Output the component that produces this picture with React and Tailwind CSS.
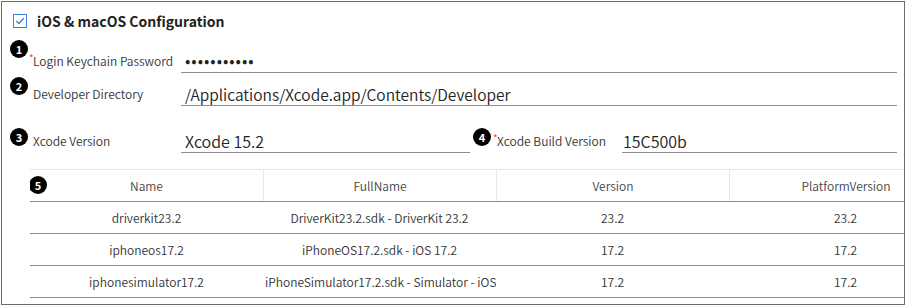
import React from "react";

function Badge({ n, className }) {
  return (
    <span
      className={`absolute flex h-[18px] w-[18px] items-center justify-center rounded-full bg-black text-[11px] font-bold leading-none text-white ${className}`}
    >
      {n}
    </span>
  );
}

function Star({ className }) {
  return (
    <span className={`absolute text-[10px] leading-none text-[#e53935] ${className}`}>*</span>
  );
}

const rows = [
  ["driverkit23.2", "DriverKit23.2.sdk - DriverKit 23.2", "23.2", "23.2"],
  ["iphoneos17.2", "iPhoneOS17.2.sdk - iOS 17.2", "17.2", "17.2"],
  ["iphonesimulator17.2", "iPhoneSimulator17.2.sdk - Simulator - iOS 17.2", "17.2", "17.2"],
];

export default function App() {
  return (
    <div className="h-[305px] w-[906px] bg-white pl-px pt-px font-['Noto_Sans_CJK_KR','Noto_Sans',sans-serif] font-[350] text-[#333]">
      <div className="h-[304px] w-[904px] overflow-hidden border border-[#6e6e6e]">
        {/* title */}
        <div className="flex h-[38px] items-center gap-[10px] pl-[11px]">
          <svg width="14" height="14" viewBox="0 0 14 14">
            <rect x="0.5" y="0.5" width="13" height="13" fill="#fff" stroke="#3d7fd8" />
            <path d="M3.2 7 L5.8 9.6 L10.8 4.2" fill="none" stroke="#3d7fd8" strokeWidth="1.4" />
          </svg>
          <span className="text-[14px] font-bold text-[#222]">iOS &amp; macOS Configuration</span>
        </div>

        {/* row 1 */}
        <div className="relative flex h-[33px] items-end pr-[7px]">
          <Badge n="1" className="left-[8px] top-0" />
          <div className="relative w-[179px] pb-[4px] pl-[31px] text-[12px] leading-[16px]">
            <Star className="left-[27px] top-0" />
            Login Keychain Password
          </div>
          <div className="flex h-[33px] flex-1 items-end border-b border-[#8c8c8c] pb-[2px] pl-[4px] text-[16px] leading-[20px] tracking-[1px] text-[#222]">
            •••••••••••
          </div>
        </div>

        {/* row 2 */}
        <div className="relative flex h-[33px] items-end pr-[7px]">
          <Badge n="2" className="left-[8px] top-[4px]" />
          <div className="w-[179px] pb-[4px] pl-[31px] text-[12px] leading-[16px]">Developer Directory</div>
          <div className="flex h-[33px] flex-1 items-end border-b border-[#8c8c8c] pb-px pl-[4px] text-[15.5px] leading-[20px] text-[#222]">
            /Applications/Xcode.app/Contents/Developer
          </div>
        </div>

        {/* row 3 */}
        <div className="relative mt-[14px] flex h-[33px] items-end pr-[7px]">
          <Badge n="3" className="left-[8px] top-[8px]" />
          <div className="w-[179px] pb-[4px] pl-[31px] text-[12px] leading-[16px]">Xcode Version</div>
          <div className="flex h-[33px] w-[289px] items-end border-b border-[#8c8c8c] pb-px pl-[4px] text-[16px] leading-[20px] text-[#222]">
            Xcode 15.2
          </div>
          <div className="relative w-[152px] pb-[4px] pl-[27px] text-[12px] leading-[16px]">
            <Badge n="4" className="left-[3px] top-[-5px]" />
            <Star className="left-[23px] top-0" />
            Xcode Build Version
          </div>
          <div className="flex h-[33px] flex-1 items-end border-b border-[#8c8c8c] pb-px pl-[1px] text-[16px] leading-[20px] text-[#222]">
            15C500b
          </div>
        </div>

        {/* table */}
        <div className="ml-[28px] mt-[16px] overflow-hidden">
          <div className="w-[932px] text-[12px]">
            <div className="relative flex h-[33px] border-b border-t border-b-[#8c8c8c] border-t-[#e6e6e6]">
              <Badge n="5" className="left-[-1px] top-[6px]" />
              {["Name", "FullName", "Version", "PlatformVersion"].map((h, i) => (
                <div
                  key={h}
                  className={`flex w-[233px] items-center justify-center text-[#444] ${i > 0 ? "border-l border-[#e6e6e6]" : ""}`}
                >
                  {h}
                </div>
              ))}
            </div>
            {rows.map((r) => (
              <div key={r[0]} className="flex h-[32px] border-b border-[#8c8c8c]">
                {r.map((c, i) => (
                  <div
                    key={i}
                    className="w-[233px] overflow-hidden whitespace-nowrap px-[2px] text-center leading-[31px]"
                  >
                    {c}
                  </div>
                ))}
              </div>
            ))}
          </div>
        </div>
      </div>
    </div>
  );
}
